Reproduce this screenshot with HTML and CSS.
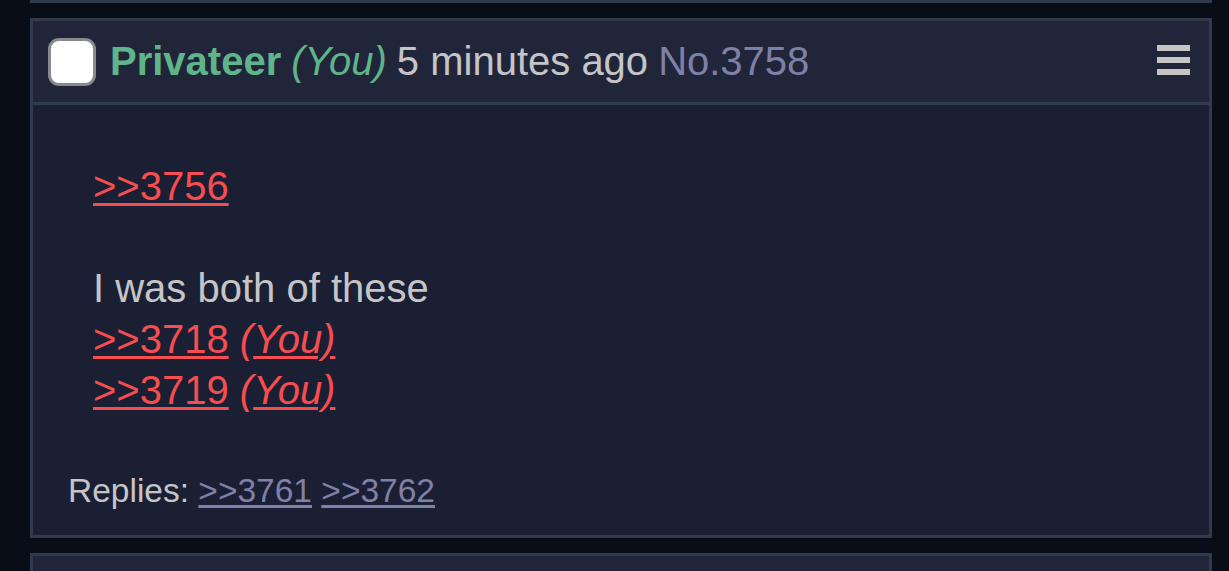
FILE: index.html
```html
<!DOCTYPE html>
<html>
<head>
<meta charset="utf-8">
<link rel="stylesheet" href="styles.css">
</head>
<body>
<div class="thread">
  <div class="prev-post"></div>
  <div class="post">
    <div class="post-header">
      <span class="checkbox"></span>
      <span class="name">Privateer</span>
      <span class="you">(You)</span>
      <span class="time">5 minutes ago</span>
      <span class="postno">No.3758</span>
      <span class="menu"><i></i><i></i><i></i></span>
    </div>
    <div class="post-body">
      <div class="message">
        <div class="line"><a class="quote">&gt;&gt;3756</a></div>
        <div class="line"></div>
        <div class="line">I was both of these</div>
        <div class="line"><a class="quote">&gt;&gt;3718</a> <span class="quote-you">(<span class="u">You)</span></span></div>
        <div class="line"><a class="quote">&gt;&gt;3719</a> <span class="quote-you">(<span class="u">You)</span></span></div>
      </div>
      <div class="replies">Replies: <a class="reply">&gt;&gt;3761</a> <a class="reply">&gt;&gt;3762</a></div>
    </div>
  </div>
  <div class="next-post"></div>
</div>
</body>
</html>
```

FILE: styles.css
```css
html, body {
  margin: 0;
  padding: 0;
  background: #090d18;
  height: 100%;
  overflow: hidden;
}
body {
  font-family: "Liberation Sans", Arial, sans-serif;
}
.thread {
  padding-left: 30px;
  width: 1182px;
  display: flex;
  flex-direction: column;
  gap: 15px;
}
.prev-post {
  height: 0;
  border-bottom: 3px solid #2f3a4d;
}
.post {
  border: 3px solid #2f3a4d;
  background: #1b1f33;
}
.post-header {
  height: 81px;
  background: #21253a;
  border-bottom: 3px solid #2f3a4d;
  display: flex;
  align-items: center;
  padding-left: 15px;
  font-size: 40px;
  white-space: pre;
}
.checkbox {
  width: 42px;
  height: 42px;
  border: 3px solid #8a8a8e;
  border-radius: 11px;
  background: #ffffff;
  margin-right: 14px;
  flex: none;
}
.name {
  color: #5fb48a;
  font-weight: bold;
  margin-right: 10px;
}
.you {
  color: #5fb48a;
  font-style: italic;
  margin-right: 10px;
}
.time {
  color: #c5c5c8;
  margin-right: 10px;
}
.postno {
  color: #7f80a6;
}
.menu {
  margin-left: auto;
  margin-right: 19px;
  display: flex;
  flex-direction: column;
  gap: 6px;
  margin-top: -3px;
}
.menu i {
  display: block;
  width: 33px;
  height: 6px;
  background: #c6c6c6;
}
.post-body {
  height: 430px;
  display: flex;
  flex-direction: column;
  padding-top: 56px;
  box-sizing: border-box;
}
.message {
  padding-left: 60px;
  font-size: 40px;
  line-height: 51px;
  color: #c5c5c8;
}
.line {
  height: 51px;
  white-space: pre;
}
.quote, .quote-you {
  color: #f54d50;
}
.quote, .u {
  text-decoration: underline;
  text-decoration-thickness: 3px;
  text-underline-offset: 3px;
}
.quote-you {
  font-style: italic;
}
.replies {
  margin-top: auto;
  padding: 0 0 24px 35px;
  font-size: 33.5px;
  line-height: 40px;
  color: #c5c5c8;
}
.reply {
  color: #8080a8;
  text-decoration: underline;
  text-decoration-thickness: 3px;
  text-underline-offset: 3px;
}
.next-post {
  height: 40px;
  border: 3px solid #2f3a4d;
  background: #21253a;
}
```
